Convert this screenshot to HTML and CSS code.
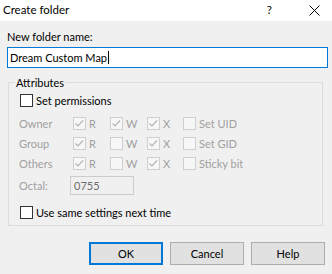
FILE: index.html
```html
<!DOCTYPE html>
<html>
<head>
<meta charset="utf-8">
<link rel="stylesheet" href="styles.css">
</head>
<body>
<div class="window">
  <div class="titlebar">
    <span class="title">Create folder</span>
    <span class="qmark">?</span>
    <svg class="close" width="11" height="11" viewBox="0 0 11 11"><path d="M0.5 0.5 L10.5 10.5 M10.5 0.5 L0.5 10.5" stroke="#000" stroke-width="1" fill="none"/></svg>
  </div>
  <div class="content">
    <div class="field-label">New folder name:</div>
    <div class="name-input"><span>Dream Custom Map</span><span class="caret"></span></div>
    <fieldset class="group">
      <legend>Attributes</legend>
      <div class="check-row main-check">
        <span class="box"></span><span>Set permissions</span>
      </div>
      <div class="perm-grid">
        <span class="perm-label">Owner</span>
        <span class="cb"><span class="box dis"><svg viewBox="0 0 13 13"><path d="M2.5 6.5 L5 9 L10 3.5" stroke="#b5b5b5" stroke-width="1.2" fill="none"/></svg></span>R</span>
        <span class="cb"><span class="box dis"><svg viewBox="0 0 13 13"><path d="M2.5 6.5 L5 9 L10 3.5" stroke="#b5b5b5" stroke-width="1.2" fill="none"/></svg></span>W</span>
        <span class="cb"><span class="box dis"><svg viewBox="0 0 13 13"><path d="M2.5 6.5 L5 9 L10 3.5" stroke="#b5b5b5" stroke-width="1.2" fill="none"/></svg></span>X</span>
        <span class="cb"><span class="box dis"></span>Set UID</span>

        <span class="perm-label">Group</span>
        <span class="cb"><span class="box dis"><svg viewBox="0 0 13 13"><path d="M2.5 6.5 L5 9 L10 3.5" stroke="#b5b5b5" stroke-width="1.2" fill="none"/></svg></span>R</span>
        <span class="cb"><span class="box dis"></span>W</span>
        <span class="cb"><span class="box dis"><svg viewBox="0 0 13 13"><path d="M2.5 6.5 L5 9 L10 3.5" stroke="#b5b5b5" stroke-width="1.2" fill="none"/></svg></span>X</span>
        <span class="cb"><span class="box dis"></span>Set GID</span>

        <span class="perm-label">Others</span>
        <span class="cb"><span class="box dis"><svg viewBox="0 0 13 13"><path d="M2.5 6.5 L5 9 L10 3.5" stroke="#b5b5b5" stroke-width="1.2" fill="none"/></svg></span>R</span>
        <span class="cb"><span class="box dis"></span>W</span>
        <span class="cb"><span class="box dis"><svg viewBox="0 0 13 13"><path d="M2.5 6.5 L5 9 L10 3.5" stroke="#b5b5b5" stroke-width="1.2" fill="none"/></svg></span>X</span>
        <span class="cb"><span class="box dis"></span>Sticky bit</span>
      </div>
      <div class="octal-row">
        <span class="perm-label">Octal:</span>
        <span class="octal-input">0755</span>
      </div>
      <div class="check-row same-check">
        <span class="box"></span><span>Use same settings next time</span>
      </div>
    </fieldset>
    <div class="buttons">
      <button class="btn default">OK</button>
      <button class="btn">Cancel</button>
      <button class="btn">Help</button>
    </div>
  </div>
</div>
</body>
</html>
```

FILE: styles.css
```css
html, body {
  margin: 0;
  padding: 0;
  background: #f0f0f0;
}
body {
  font-family: "Lato", "Noto Sans", sans-serif;
  font-size: 11px;
  color: #000;
}
.window {
  width: 332px;
  height: 274px;
  background: #f0f0f0;
  display: flex;
  flex-direction: column;
  overflow: hidden;
}
.titlebar {
  height: 21px;
  background: #fff;
  display: flex;
  align-items: center;
  padding-left: 3px;
  flex-shrink: 0;
}
.title {
  flex: 1;
  font-size: 11.5px;
  line-height: 15px;
  margin-top: -2px;
}
.qmark {
  font-size: 11.5px;
  margin-right: 37px;
  margin-top: -2px;
}
.close {
  margin-right: 12px;
  display: block;
}
.content {
  padding: 0 4px 0 7px;
  display: flex;
  flex-direction: column;
}
.field-label {
  margin-top: 8px;
  line-height: 15px;
}
.name-input {
  margin-top: 3px;
  height: 19px;
  width: 317px;
  border: 1px solid #0078d7;
  background: #fff;
  padding-left: 2px;
  display: flex;
  align-items: center;
  line-height: 15px;
}
.caret {
  display: inline-block;
  width: 1px;
  height: 13px;
  background: #000;
  margin-left: 1px;
}
.group {
  margin: 7px 5px 0 1px;
  border: 1px solid #dcdcdc;
  padding: 0 0 0 10px;
  height: 151px;
  box-sizing: border-box;
  min-width: 0;
}
.group legend {
  padding: 0 1px;
  margin-left: -4px;
  line-height: 15px;
}
.check-row {
  display: flex;
  align-items: center;
  height: 15px;
}
.box {
  width: 11px;
  height: 11px;
  border: 1px solid #333;
  background: #fff;
  display: inline-block;
  flex-shrink: 0;
  margin-right: 3px;
  position: relative;
}
.box svg {
  display: block;
  width: 13px;
  height: 13px;
  margin: -1px 0 0 -1px;
}
.box.dis {
  border-color: #cfcfcf;
  background: #f7f7f7;
}
.main-check {
  margin-top: 3px;
  margin-left: 1px;
}
.perm-grid {
  margin-top: 5px;
  display: grid;
  grid-template-columns: 54px 37px 37px 36px auto;
  grid-auto-rows: 20px;
  align-items: center;
  color: #a0a0a0;
}
.cb {
  display: flex;
  align-items: center;
}
.perm-label {
  color: #a0a0a0;
}
.octal-row {
  display: grid;
  grid-template-columns: 51px auto;
  align-items: center;
  margin-top: 3px;
}
.octal-input {
  width: 59px;
  height: 17px;
  border: 1px solid #cccccc;
  background: #f0f0f0;
  color: #6d6d6d;
  padding-left: 3px;
  line-height: 17px;
}
.same-check {
  margin-top: 10px;
  margin-left: 1px;
}
.buttons {
  display: flex;
  justify-content: flex-end;
  gap: 7px;
  margin-top: 16px;
  margin-right: 3px;
}
.btn {
  width: 74px;
  height: 23px;
  background: #e1e1e1;
  border: 1px solid #adadad;
  font-family: "Lato", "Noto Sans", sans-serif;
  font-size: 11px;
  color: #000;
  padding: 0;
  margin: 0;
}
.btn.default {
  border: 2px solid #0078d7;
}
```
